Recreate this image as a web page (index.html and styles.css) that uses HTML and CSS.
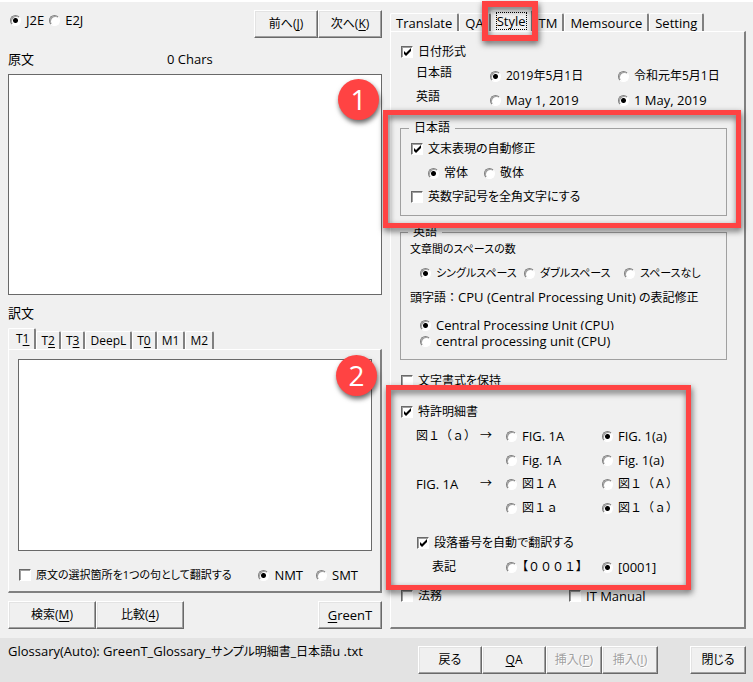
FILE: index.html
```html
<!DOCTYPE html>
<html lang="ja">
<head>
<meta charset="utf-8">
<title>GreenT</title>
<link rel="stylesheet" href="styles.css">
</head>
<body>
<div class="window">
  <main class="main">
    <section class="left">
      <div class="head">
        <div class="modes en">
          <label class="opt"><input type="radio" name="mode" checked><span>J2E</span></label>
          <label class="opt"><input type="radio" name="mode"><span>E2J</span></label>
        </div>
        <div class="buttons">
          <button class="btn w64" type="button">前へ(<u>J</u>)</button>
          <button class="btn w64" type="button">次へ(<u>K</u>)</button>
        </div>
      </div>
      <div class="caption"><label for="source">原文</label><span>0 Chars</span></div>
      <div class="field source">
        <textarea id="source"></textarea>
        <span class="badge">1</span>
      </div>
      <div class="caption target-caption"><label for="target">訳文</label></div>
      <div class="tabs latin">
        <button type="button" class="tab active"><span>T<u>1</u></span></button>
        <button type="button" class="tab">T<u>2</u></button>
        <button type="button" class="tab">T<u>3</u></button>
        <button type="button" class="tab">DeepL</button>
        <button type="button" class="tab">T<u>0</u></button>
        <button type="button" class="tab">M1</button>
        <button type="button" class="tab">M2</button>
      </div>
      <div class="panel target">
        <textarea id="target"></textarea>
        <span class="badge">2</span>
        <div class="engine">
          <label class="opt kana"><input type="checkbox"><span>原文の選択箇所を1つの句として翻訳する</span></label>
          <div class="engines en">
            <label class="opt"><input type="radio" name="engine" checked><span>NMT</span></label>
            <label class="opt"><input type="radio" name="engine"><span>SMT</span></label>
          </div>
        </div>
      </div>
      <div class="actions">
        <div class="buttons">
          <button class="btn w88" type="button">検索(<u>M</u>)</button>
          <button class="btn w88" type="button">比較(<u>4</u>)</button>
        </div>
        <button class="btn w64 en" type="button"><u>G</u>reenT</button>
      </div>
    </section>

    <section class="right">
      <div class="tabs en">
        <button type="button" class="tab">Translate</button>
        <button type="button" class="tab">QA</button>
        <button type="button" class="tab active marked mark-tab"><span class="focus">Style</span></button>
        <button type="button" class="tab">TM</button>
        <button type="button" class="tab">Memsource</button>
        <button type="button" class="tab">Setting</button>
      </div>
      <div class="panel settings">
        <div class="row"><label class="opt"><input type="checkbox" checked><span>日付形式</span></label></div>
        <div class="dates">
          <span class="name">日本語</span>
          <label class="opt"><input type="radio" name="date-ja" checked><span>2019年5月1日</span></label>
          <label class="opt"><input type="radio" name="date-ja"><span>令和元年5月1日</span></label>
          <span class="name">英語</span>
          <label class="opt en"><input type="radio" name="date-en"><span>May 1, 2019</span></label>
          <label class="opt en"><input type="radio" name="date-en" checked><span>1 May, 2019</span></label>
        </div>

        <div class="marked mark-japanese">
          <fieldset class="group japanese">
            <legend>日本語</legend>
            <div class="row"><label class="opt"><input type="checkbox" checked><span>文末表現の自動修正</span></label></div>
            <div class="row endings">
              <label class="opt"><input type="radio" name="ending" checked><span>常体</span></label>
              <label class="opt"><input type="radio" name="ending"><span>敬体</span></label>
            </div>
            <div class="row"><label class="opt"><input type="checkbox"><span>英数字記号を全角文字にする</span></label></div>
          </fieldset>
        </div>

        <fieldset class="group english">
          <legend>英語</legend>
          <div class="text kana">文章間のスペースの数</div>
          <div class="spaces kana">
            <label class="opt"><input type="radio" name="space" checked><span>シングルスペース</span></label>
            <label class="opt"><input type="radio" name="space"><span>ダブルスペース</span></label>
            <label class="opt"><input type="radio" name="space"><span>スペースなし</span></label>
          </div>
          <div class="row"><span>頭字語<span class="wide">：</span><span class="en">CPU (Central Processing Unit)</span> の表記修正</span></div>
          <div class="acronyms en">
            <label class="opt"><input type="radio" name="acronym" checked><span class="cut">Central Processing Unit (CPU)</span></label>
            <label class="opt"><input type="radio" name="acronym"><span>central processing unit (CPU)</span></label>
          </div>
        </fieldset>

        <div class="row keep"><label class="opt"><input type="checkbox"><span>文字書式を保持</span></label></div>

        <div class="marked mark-patent">
          <div class="row"><label class="opt"><input type="checkbox" checked><span>特許明細書</span></label></div>
          <div class="patent">
            <span class="from wide"><span>図１（ａ）</span><span>→</span></span>
            <label class="opt en"><input type="radio" name="fig-en"><span>FIG. 1A</span></label>
            <label class="opt en"><input type="radio" name="fig-en" checked><span>FIG. 1(a)</span></label>
            <label class="opt en second"><input type="radio" name="fig-en"><span>Fig. 1A</span></label>
            <label class="opt en"><input type="radio" name="fig-en"><span>Fig. 1(a)</span></label>
            <span class="from"><span class="en">FIG. 1A</span><span class="wide">→</span></span>
            <label class="opt wide"><input type="radio" name="fig-ja"><span>図１Ａ</span></label>
            <label class="opt wide"><input type="radio" name="fig-ja"><span>図１（Ａ）</span></label>
            <label class="opt wide second"><input type="radio" name="fig-ja"><span>図１ａ</span></label>
            <label class="opt wide"><input type="radio" name="fig-ja" checked><span>図１（ａ）</span></label>
          </div>
          <div class="row paragraph"><label class="opt"><input type="checkbox" checked><span>段落番号を自動で翻訳する</span></label></div>
          <div class="patent">
            <span class="notation">表記</span>
            <label class="opt"><input type="radio" name="number"><span>【<span class="wide">０００１</span>】</span></label>
            <label class="opt en"><input type="radio" name="number" checked><span>[0001]</span></label>
          </div>
        </div>

        <div class="fields">
          <label class="opt"><input type="checkbox"><span>法務</span></label>
          <label class="opt en"><input type="checkbox"><span>IT Manual</span></label>
        </div>
      </div>
    </section>
  </main>

  <footer class="footer">
    <span class="glossary"><span class="en">Glossary(Auto): GreenT_Glossary_</span>サンプル明細書_日本語<span class="en">u .txt</span></span>
    <div class="buttons">
      <button class="btn w64" type="button">戻る</button>
      <button class="btn w64" type="button"><u>Q</u>A</button>
      <button class="btn w56" type="button" disabled>挿入(<u>P</u>)</button>
      <button class="btn w56" type="button" disabled>挿入(<u>I</u>)</button>
    </div>
    <button class="btn w56" type="button">閉じる</button>
  </footer>
</div>
</body>
</html>
```
FILE: styles.css
```css
* {
  box-sizing: border-box;
}

body {
  margin: 0;
  background: #f0f0f0;
  color: #000;
  font-family: "Open Sans", "Noto Sans CJK JP", sans-serif;
  font-size: 12px;
  line-height: 16px;
  font-feature-settings: "palt";
}

button,
textarea {
  font: inherit;
  font-feature-settings: inherit;
  color: inherit;
}

u {
  text-underline-offset: 2px;
}

.window {
  display: flex;
  flex-direction: column;
  min-height: 100vh;
  border-top: 2px solid #fff;
}

.main {
  display: flex;
  flex: 1;
  gap: 8px;
  padding: 8px 7px 9px 8px;
}

.left,
.right {
  display: flex;
  flex-direction: column;
  min-width: 0;
}

.left {
  flex: 374 1 0;
}

.right {
  flex: 356 1 0;
}

/* Text sizes by script */

.en {
  font-size: 13px;
}

.kana {
  font-size: 11px;
}

.wide {
  font-feature-settings: normal;
}

/* Options */

.opt {
  display: flex;
  align-items: center;
  gap: 5px;
  white-space: nowrap;
}

input {
  appearance: none;
  flex: none;
  margin: 0;
  background: #fff;
}

input[type="radio"] {
  width: 11px;
  height: 11px;
  border: 1px solid;
  border-color: #808080 #fff #fff #808080;
  border-radius: 50%;
  box-shadow: inset 1px 1px #a0a0a0;
}

input[type="radio"]:checked {
  background: radial-gradient(circle, #000 0 2px, #fff 3px);
}

input[type="checkbox"] {
  width: 12px;
  height: 12px;
  border: 1px solid;
  border-color: #696969 #fff #fff #696969;
  box-shadow: inset 1px 1px #a0a0a0;
}

input[type="checkbox"]:checked::before {
  content: "";
  display: block;
  width: 10px;
  height: 10px;
  background: #000;
  clip-path: polygon(20% 40%, 40% 60%, 90% 10%, 90% 40%, 40% 90%, 20% 70%);
}

/* Buttons */

.buttons {
  display: flex;
}

.btn {
  height: 28px;
  padding: 0;
  border: 1px solid;
  border-color: #fff #696969 #696969 #fff;
  background: #f0f0f0;
  box-shadow: inset -1px -1px #a0a0a0, inset 1px 1px #e3e3e3;
}

.btn.en {
  font-size: 13px;
}

.btn:disabled {
  color: #a0a0a0;
  text-shadow: 1px 1px #fff;
}

.w56 {
  width: 56px;
}

.w64 {
  width: 64px;
}

.w88 {
  width: 88px;
}

/* Tabs and panels */

.tabs {
  display: flex;
  align-items: flex-end;
  height: 21px;
}

.tab {
  height: 18px;
  padding: 0 5px;
  border: solid;
  border-width: 1px 2px 0 1px;
  border-color: #fff #808080 #fff #fff;
  border-radius: 2px 2px 0 0;
  background: #f0f0f0;
  line-height: 16px;
  white-space: nowrap;
}

.tab.active {
  height: 21px;
}

.latin .tab {
  padding: 0 4px;
}

.latin .tab.active {
  padding: 0 5px 0 7px;
}

.focus {
  display: block;
  outline: 1px dotted #000;
}

.panel {
  position: relative;
  border: solid;
  border-width: 1px 2px 2px 1px;
  border-color: #fff #808080 #808080 #fff;
}

textarea {
  display: block;
  width: 100%;
  flex: 1;
  padding: 2px;
  border: 1px solid #696969;
  background: #fff;
  resize: none;
}

/* Left column */

.head {
  display: flex;
  justify-content: space-between;
}

.modes {
  display: flex;
  gap: 5px;
  height: 20px;
  padding-left: 2px;
}

.caption {
  display: grid;
  grid-template-columns: 159px auto;
  align-items: center;
  height: 22px;
  margin: 10px 0 4px;
  font-size: 13px;
}

.target-caption {
  margin: 7px 0 4px;
}

.field {
  position: relative;
  display: flex;
  flex: 1 1 221px;
}

.target {
  display: flex;
  flex: 1 1 244px;
  flex-direction: column;
  padding: 9px 8px 4px 9px;
}

.engine {
  display: flex;
  justify-content: space-between;
  height: 24px;
  margin-top: 12px;
  padding: 0 14px 0 1px;
}

.engines {
  display: flex;
  gap: 13px;
}

.actions {
  display: flex;
  justify-content: space-between;
  margin-top: 8px;
}

.badge {
  position: absolute;
  top: 5px;
  right: 3px;
  width: 41px;
  height: 41px;
  border-radius: 50%;
  background: #ff4343;
  box-shadow: 1px 3px 5px rgba(0, 0, 0, 0.6);
  color: #fff;
  font: 28px/41px "Open Sans", sans-serif;
  text-align: center;
}

/* Style settings */

.settings {
  flex: 1;
  padding: 8px 17px 8px 10px;
}

.right .tabs {
  position: relative;
  z-index: 1;
}

.row {
  display: flex;
  align-items: center;
  height: 24px;
  white-space: nowrap;
}

.dates {
  display: grid;
  grid-template-columns: 74px 128px auto;
  grid-auto-rows: 24px;
  padding-left: 15px;
}

.name {
  line-height: 18px;
}

.group {
  min-width: 0;
  margin: 8px 0 0 -1px;
  border: 1px solid #a0a0a0;
}

.group legend {
  margin-left: -2px;
  padding: 0 5px;
}

.japanese {
  padding: 1px 10px 6px;
}

.english {
  padding: 0 9px 10px;
}

.endings {
  gap: 16px;
  padding-left: 17px;
}

.text {
  line-height: 18px;
}

.spaces {
  display: grid;
  grid-template-columns: 104px 100px auto;
  height: 24px;
  margin-top: 3px;
  padding-left: 10px;
}

.acronyms {
  margin-top: 8px;
  padding-left: 10px;
}

.cut {
  height: 13px;
  margin-bottom: 3px;
  overflow: hidden;
}

.keep {
  margin: 9px 0 7px;
}

.patent {
  display: grid;
  grid-template-columns: 90px 96px auto;
  grid-auto-rows: 24px;
  align-items: center;
  padding-left: 15px;
}

.from {
  display: flex;
  justify-content: space-between;
  width: 76px;
  white-space: nowrap;
}

.second {
  grid-column: 2;
}

.paragraph {
  margin-top: 11px;
  padding-left: 16px;
}

.notation {
  padding-left: 16px;
}

.fields {
  display: grid;
  grid-template-columns: 168px auto;
  height: 24px;
  margin-top: 5px;
}

/* Red call-out frames */

.marked {
  position: relative;
}

.marked::before {
  content: "";
  position: absolute;
  z-index: 2;
  border: 5px solid #ff4343;
  filter: drop-shadow(1px 3px 3px rgba(0, 0, 0, 0.6));
  pointer-events: none;
}

.mark-tab::before {
  inset: -10px -7px -10px -10px;
  border-width: 6px;
}

.mark-japanese::before {
  inset: -10px -14px -12px -18px;
}

.mark-patent::before {
  inset: -15px 36px -11px -15px;
}

/* Footer */

.footer {
  display: flex;
  gap: 32px;
  padding: 8px 7px 8px 8px;
  background: #e3e3e3;
}

.glossary {
  flex: 1;
  line-height: 10px;
}
```
